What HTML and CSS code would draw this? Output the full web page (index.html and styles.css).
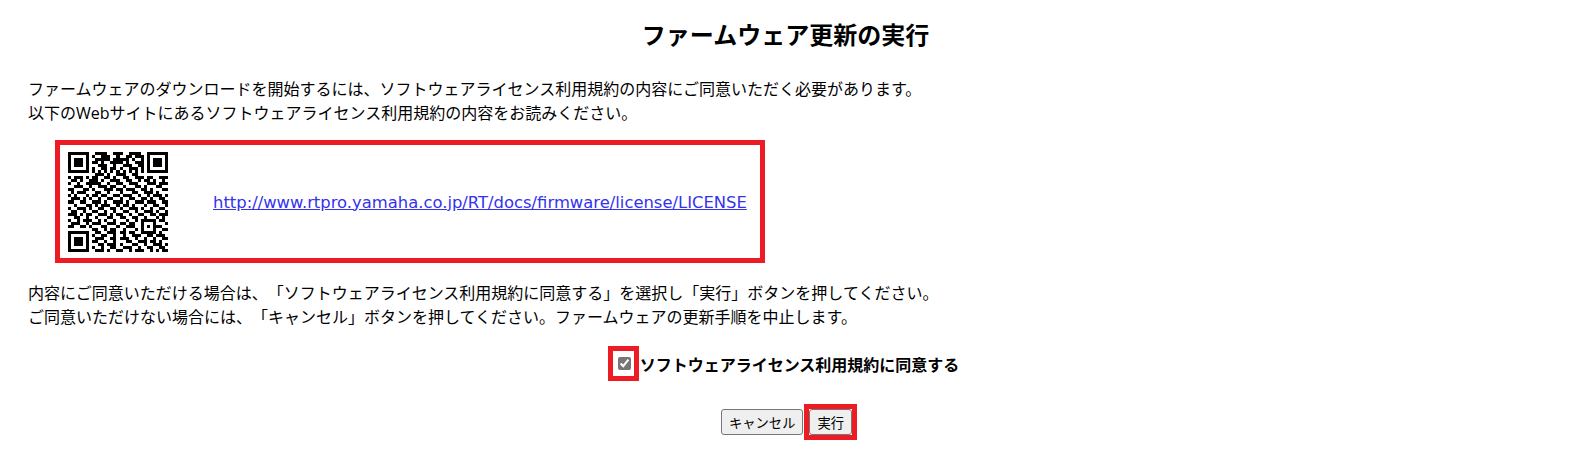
FILE: index.html
```html
<!DOCTYPE html>
<html lang="ja">
<head>
    <meta charset="UTF-8">
    <title>ファームウェア更新の実行</title>
    <link rel="stylesheet" href="styles.css">
</head>
<body>
    <div class="page">
        <h2 class="title">ファームウェア更新の実行</h2>

        <p class="text">ファームウェアのダウンロードを開始するには、ソフトウェアライセンス利用規約の内容にご同意いただく必要があります。<br>以下のWebサイトにあるソフトウェアライセンス利用規約の内容をお読みください。</p>

        <div class="license">
            <svg class="qr" viewBox="0 0 33 33" shape-rendering="crispEdges">
                <path d="M0 0h7v7h-7zM1 1v5h5v-5zM2 2h3v3h-3zM26 0h7v7h-7zM27 1v5h5v-5zM28 2h3v3h-3zM0 26h7v7h-7zM1 27v5h5v-5zM2 28h3v3h-3z" fill-rule="evenodd"/>
                <path d="M9 0h4M15 0h3M20 0h4
                         M8 1h1M11 1h3M16 1h1M19 1h2M22 1h3
                         M9 2h5M15 2h5M21 2h1M24 2h1
                         M8 3h2M11 3h1M14 3h4M19 3h1M22 3h3
                         M10 4h3M15 4h1M18 4h3M23 4h2
                         M8 5h1M11 5h2M14 5h2M17 5h1M20 5h3M24 5h1
                         M8 6h1M10 6h1M12 6h1M14 6h1M16 6h1M18 6h1M20 6h1M22 6h1M24 6h1
                         M9 7h3M13 7h1M16 7h3M21 7h2
                         M0 8h1M2 8h3M6 8h1M8 8h2M12 8h2M15 8h1M18 8h2M22 8h3M26 8h2M30 8h3
                         M1 9h2M4 9h1M7 9h3M11 9h1M14 9h3M19 9h2M23 9h1M25 9h2M28 9h1M31 9h1
                         M0 10h1M3 10h1M6 10h5M13 10h1M16 10h2M20 10h3M26 10h3M30 10h3
                         M2 11h3M7 11h1M10 11h3M14 11h2M18 11h1M22 11h2M25 11h1M29 11h2
                         M0 12h2M5 12h2M8 12h1M12 12h3M16 12h2M19 12h3M24 12h2M27 12h1M31 12h2
                         M1 13h1M3 13h3M9 13h2M13 13h1M17 13h1M21 13h2M25 13h3M29 13h1
                         M0 14h1M2 14h1M6 14h1M8 14h2M11 14h2M15 14h2M18 14h3M23 14h1M26 14h1M28 14h3M32 14h1
                         M1 15h3M5 15h1M7 15h1M10 15h1M13 15h2M17 15h1M20 15h2M24 15h2M27 15h1M30 15h2
                         M0 16h2M4 16h2M8 16h3M12 16h1M15 16h3M19 16h1M22 16h3M26 16h3M31 16h2
                         M2 17h1M6 17h2M9 17h1M11 17h3M16 17h1M18 17h2M21 17h1M25 17h1M28 17h2M32 17h1
                         M0 18h1M3 18h3M7 18h1M10 18h2M14 18h2M17 18h1M20 18h3M24 18h1M27 18h1M30 18h2
                         M1 19h2M5 19h1M8 19h2M12 19h1M15 19h1M18 19h2M22 19h1M25 19h3M29 19h1M32 19h1
                         M0 20h3M4 20h1M6 20h2M10 20h3M14 20h1M16 20h2M20 20h1M23 20h2M27 20h2M30 20h3
                         M2 21h2M6 21h1M9 21h1M13 21h2M17 21h2M21 21h2M25 21h1M29 21h1M31 21h1
                         M0 22h1M3 22h1M5 22h3M10 22h1M12 22h1M15 22h1M19 22h1M22 22h1M24 22h5M30 22h2
                         M1 23h3M6 23h1M8 23h3M13 23h3M17 23h2M20 23h2M24 23h1M28 23h1M32 23h1
                         M0 24h2M4 24h2M7 24h1M11 24h2M16 24h1M19 24h3M24 24h1M26 24h1M28 24h3
                         M8 25h2M12 25h1M14 25h2M18 25h1M22 25h1M24 25h1M28 25h1M31 25h2
                         M9 26h2M13 26h3M17 26h2M20 26h2M24 26h5M30 26h1
                         M8 27h1M11 27h2M15 27h1M18 27h1M21 27h3M26 27h2M29 27h3
                         M9 28h3M14 28h2M17 28h3M22 28h1M25 28h1M28 28h1M31 28h2
                         M8 29h2M12 29h1M15 29h1M19 29h2M23 29h3M27 29h2M30 29h1
                         M10 30h2M13 30h3M17 30h1M21 30h2M25 30h1M28 30h3M32 30h1
                         M8 31h1M11 31h1M14 31h2M18 31h3M23 31h1M26 31h2M30 31h2
                         M9 32h3M13 32h1M16 32h2M20 32h1M22 32h3M27 32h1M29 32h1M31 32h2"
                      stroke="#000" stroke-width="1" transform="translate(0 .5)"/>
            </svg>
            <a class="license-link" href="#">http://www.rtpro.yamaha.co.jp/RT/docs/firmware/license/LICENSE</a>
        </div>

        <p class="text">内容にご同意いただける場合は、「ソフトウェアライセンス利用規約に同意する」を選択し「実行」ボタンを押してください。<br>ご同意いただけない場合には、「キャンセル」ボタンを押してください。ファームウェアの更新手順を中止します。</p>

        <div class="agree">
            <span class="mark"><input type="checkbox" class="agree-check" id="agree" checked></span>
            <label class="agree-label" for="agree">ソフトウェアライセンス利用規約に同意する</label>
        </div>

        <div class="actions">
            <button class="btn">キャンセル</button>
            <span class="mark mark-btn"><button class="btn">実行</button></span>
        </div>
    </div>
</body>
</html>
```

FILE: styles.css
```css
* {
    box-sizing: border-box;
}

body {
    margin: 0;
    background: #fff;
    color: #000;
    font-family: "Open Sans", "Noto Sans CJK JP", sans-serif;
    font-size: 16px;
    text-spacing-trim: space-all;
}

.page {
    width: 1568px;
    padding: 19px 8px 0 28px;
}

.title {
    margin: 0 0 26px;
    padding-right: 17px;
    font-size: 24px;
    line-height: 32px;
    font-weight: 700;
    text-align: center;
}

.text {
    margin: 0;
    line-height: 24px;
}

.license {
    display: flex;
    align-items: center;
    width: 710px;
    height: 123px;
    margin: 15px 0 18px 27px;
    padding: 0 12px 0 8px;
    border: 5px solid #ed1c24;
}

.qr {
    width: 100px;
    height: 100px;
    flex: none;
    margin-right: 45px;
}

.license-link {
    margin-top: 1px;
    color: #3333ee;
    font-family: "DejaVu Sans", sans-serif;
    font-size: 16.4px;
    white-space: nowrap;
}

.agree {
    display: flex;
    align-items: center;
    justify-content: center;
    margin-top: 17px;
    padding-right: 21px;
}

.mark {
    display: flex;
    border: 5px solid #ed1c24;
}

.agree-check {
    width: 13px;
    height: 13px;
    margin: 6px 3px 6px 5px;
    accent-color: #767676;
}

.agree-label {
    margin-left: 1px;
    font-weight: 700;
}

.actions {
    display: flex;
    align-items: center;
    justify-content: center;
    margin-top: 23px;
    padding-right: 10px;
}

.btn {
    height: 26px;
    padding: 0 7px;
    background: #efefef;
    border: 1px solid #767676;
    border-radius: 3px;
    color: #000;
    font-family: inherit;
    font-size: 13.3px;
}

.mark-btn {
    margin-left: 1px;
}
```
